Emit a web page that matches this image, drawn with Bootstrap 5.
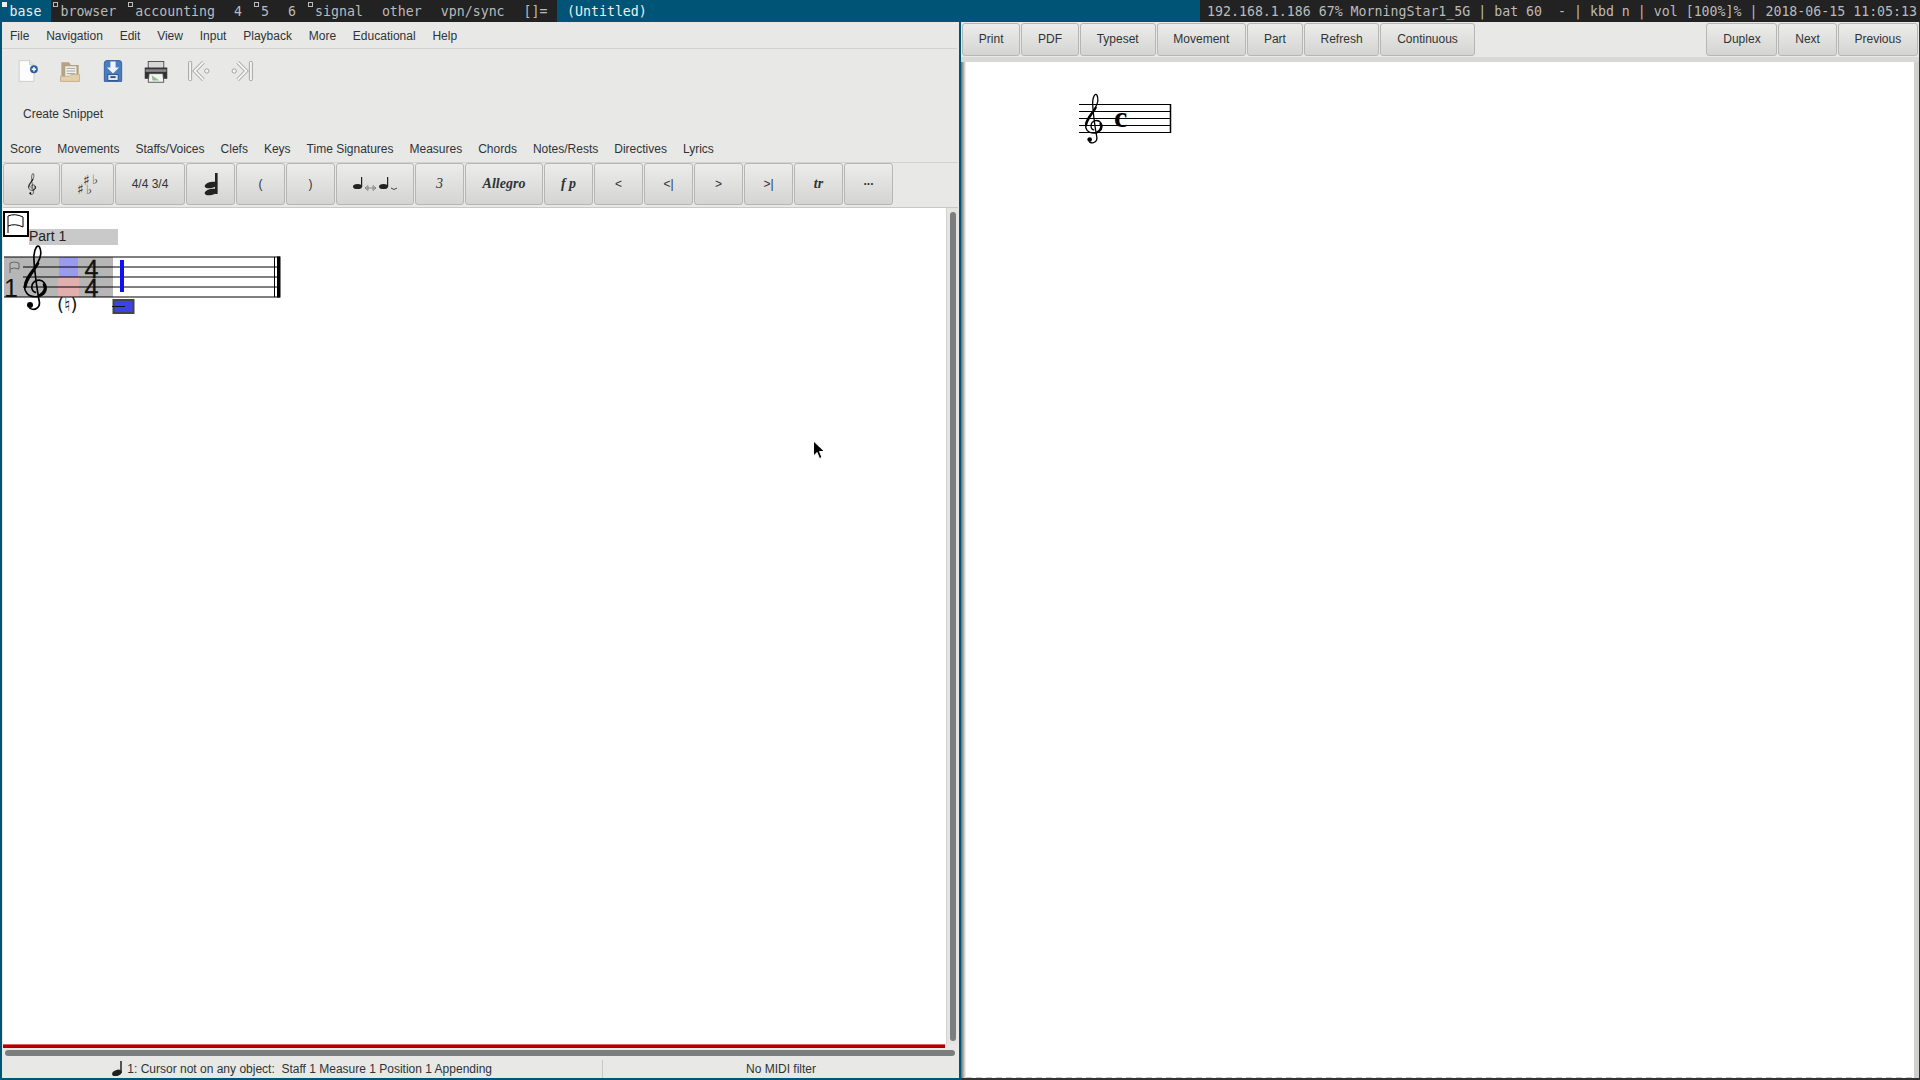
<!DOCTYPE html>
<html lang="en">
<head>
<meta charset="UTF-8">
<title>Denemo</title>
<link href="https://cdn.jsdelivr.net/npm/bootstrap@5.3.0/dist/css/bootstrap.min.css" rel="stylesheet">
<style>
    html, body { margin: 0; height: 100%; overflow: hidden; }
    body { width: 1920px; height: 1080px; background: #fff; font-family: "Liberation Sans", sans-serif; font-size: 12px; color: #2e3436; }
    .wm-bar { height: 22px; background: #005577; color: #eee; font-family: "DejaVu Sans Mono", monospace; font-size: 13.25px; line-height: 24px; white-space: pre; overflow: hidden; }
    .wm-tags { background: #222; color: #bbb; }
    .wm-tag { padding: 0 9.5px; position: relative; }
    .wm-tag.on { background: #005577; color: #eee; }
    .wm-mark { position: absolute; left: 2px; top: 2px; width: 5px; height: 5px; border: 1px solid #bbb; }
    .on .wm-mark { background: #eee; border-color: #eee; }
    .wm-title { padding-left: 10px; }
    .wm-status { background: #222; color: #bbb; padding: 0 3px 0 7px; }
    .main-row { height: 1058px; }
    .left-win { width: 961px; flex: none; background: #e8e8e7; border-left: 2px solid #005577; border-right: 2px solid #005577; border-bottom: 2px solid #005577; }
    .menu-row { height: 27px; margin-right: 2px; padding-left: 8px; column-gap: 16.8px; line-height: 28px; border-bottom: 1px solid #d2d2d0; }
    .tool-row { height: 44px; padding-left: 12px; gap: 17px; }
    .tool-row svg { width: 26px; height: 26px; }
    .snippet-row { height: 33px; padding-left: 21px; padding-top: 14px; line-height: 14px; }
    .tabs-row { height: 36px; padding-left: 8px; padding-top: 16px; column-gap: 16px; line-height: 14px; }
    .tabs-row span, .menu-row span { white-space: nowrap; }
    .gtk-btn { --bs-btn-padding-x: 0; --bs-btn-padding-y: 0; --bs-btn-font-size: 12px; --bs-btn-border-radius: 3px; border: 1px solid #b6b6b4; background: linear-gradient(#ececeb, #d4d4d2); color: #2e3436; display: flex; align-items: center; justify-content: center; line-height: 1; }
    .btn-grid { display: grid; grid-template-columns: 57px 53px 70px 49px 49px 49px 78px 49px 78px 49px 49px 49px 49px 49px 49px 49px; column-gap: 1px; height: 43px; margin-left: 1px; border-top: 1px solid #d2d2d0; margin-right: 1px; }
    .serif-i { font-family: "Liberation Serif", serif; font-style: italic; }
    .serif-b { font-weight: 700; font-size: 14px; }
    .num-three { --bs-btn-font-size: 14px; }
    .dots-up { padding-bottom: 7px; }
    .score-frame { position: relative; height: 837px; margin: 2px 1px 0 1px; border-top: 1px solid #c8c8c6; background: #fff; overflow: hidden; }
    .vtrack { position: absolute; right: 0; top: 0; bottom: 0; width: 12px; background: #e4e4e3; border-left: 1px solid #d2d2d0; }
    .vthumb { position: absolute; left: 3px; width: 6px; top: 4px; bottom: 3px; background: #7a7e7e; border-radius: 3px; }
    .red-line { margin: 0 14px 0 1px; background: #b00000; border-top: 1px solid #d86060; height: 4px; }
    .hscroll { height: 12px; padding: 2px 4px 4px 3px; }
    .hthumb { height: 6px; background: #7a7e7e; border-radius: 3px; }
    .status-row { height: 18px; line-height: 19px; white-space: pre; }
    .status-left { width: 601px; border-right: 1px solid #c8c8c6; }
    .status-right { flex: 1; }
    .status-row svg { width: 12px; height: 15px; }
    .right-win { flex: 1; background: #fff; border-right: 1px solid #333; border-bottom: 2px solid #333; }
    .print-tools { height: 35px; background: #e8e8e7; padding: 1px 1px 2px 1px; gap: 1px; }
    .print-tools .gtk-btn { padding: 0 15.8px 2px; height: 33px; }
    .print-sep { height: 5px; background: #d8d8d6; }
    .print-page { height: 1016px; background: #fff; border-right: 5px solid #d0d0ce; }
    .print-shadow { width: 5px; background: linear-gradient(90deg, #6a6a6a, #f8f8f8); }
    .print-sheet { background: repeating-linear-gradient(90deg, #c8c8c8 0 6px, transparent 6px 10px) left bottom / 100% 1px no-repeat; }
    .mouse-arrow { position: absolute; left: 812px; top: 440px; width: 14px; height: 20px; }
</style>
</head>
<body>
<svg width="0" height="0" class="position-absolute">
    <symbol id="clef" viewBox="60 110 90 215">
        <g fill="none" stroke="#000" stroke-linecap="round">
            <path stroke-width="5" d="M106 262C92 258 90 232 112 226C130 222 140 240 138 252C136 268 120 276 104 275C82 274 72 258 74 240C76 215 100 195 112 175C122 158 126 140 118 125C112 118 104 130 102 150C100 175 112 260 118 290C121 308 104 318 90 310"/>
            <path stroke-width="8" d="M76 245C78 222 100 200 114 175M132 238C138 250 134 264 118 272"/>
        </g>
        <circle cx="90" cy="300" r="9" fill="#000"/>
    </symbol>
    <symbol id="note" viewBox="0 0 16 20">
        <rect x="11" y="0" width="2" height="16" fill="#222"/>
        <ellipse cx="6.500" cy="16" rx="6.500" ry="4" fill="#222" transform="rotate(-20 6.500 16)"/>
    </symbol>
</svg>

<div class="wm-bar d-flex">
    <div class="wm-tags d-flex">
        <span class="wm-tag on"><i class="wm-mark"></i>base</span>
        <span class="wm-tag"><i class="wm-mark"></i>browser</span>
        <span class="wm-tag"><i class="wm-mark"></i>accounting</span>
        <span class="wm-tag">4</span>
        <span class="wm-tag"><i class="wm-mark"></i>5</span>
        <span class="wm-tag">6</span>
        <span class="wm-tag"><i class="wm-mark"></i>signal</span>
        <span class="wm-tag">other</span>
        <span class="wm-tag">vpn/sync</span>
        <span class="wm-tag">[]=</span>
    </div>
    <div class="wm-title flex-grow-1">(Untitled)</div>
    <div class="wm-status">192.168.1.186 67% MorningStar1_5G | bat 60  - | kbd n | vol [100%]% | 2018-06-15 11:05:13</div>
</div>

<div class="main-row d-flex">
    <div class="left-win d-flex flex-column">
        <div class="menu-row d-flex">
            <span>File</span><span>Navigation</span><span>Edit</span><span>View</span><span>Input</span><span>Playback</span><span>More</span><span>Educational</span><span>Help</span>
        </div>
        <div class="tool-row d-flex align-items-center">
            <svg viewBox="0 0 30 30"><path d="M6 3H18L23 8V27H6Z" fill="#fdfdfd" stroke="#c8c8c8"/><path d="M18 3V8H23" fill="#e4e4e4" stroke="#c8c8c8"/><circle cx="23" cy="13" r="4.500" fill="#2c5f9e"/><path d="M20.500 13H25.500M23 10.500V15.500" stroke="#fff" stroke-width="1.600"/></svg>
            <svg viewBox="0 0 30 30"><path d="M5 5H14L16 8H25V27H5Z" fill="#b9a27f"/><rect x="9" y="9" width="14" height="13" fill="#f1f1ee" stroke="#a89878"/><path d="M11 12H21M11 15H21M11 18H21" stroke="#999"/><path d="M4 21H14L16 19H26V27H4Z" fill="#e3cfae" stroke="#c4ae8c"/></svg>
            <svg viewBox="0 0 30 30"><path d="M5 6Q5 3 8 3H22Q25 3 25 6V27H5Z" fill="#4a7cc4" stroke="#2d5799"/><path d="M12 4H18V11H22L15 18L8 11H12Z" fill="#f2f4f7"/><path d="M9 19H21V26H9Z" fill="#dfe6ef" stroke="#24477f"/><rect x="12" y="21" width="6" height="2" fill="#24477f"/></svg>
            <svg viewBox="0 0 30 30"><rect x="6" y="4" width="18" height="9" fill="#d8d8d8" stroke="#444"/><path d="M2 11H28V24H2Z" fill="#333"/><rect x="3" y="13" width="24" height="3" fill="#888"/><path d="M7 18H23L24 28H6Z" fill="#f3f3f3" stroke="#444"/><path d="M10 20L19 26H11Z" fill="#8fbf8c"/></svg>
            <svg viewBox="0 0 30 30"><rect x="3" y="4" width="3.500" height="22" rx="1" fill="#f4f4f4" stroke="#999"/><path d="M20 5L10 15L20 25" fill="none" stroke="#999" stroke-width="4"/><path d="M20 5L10 15L20 25" fill="none" stroke="#f4f4f4" stroke-width="2.400"/><circle cx="24" cy="15" r="2.500" fill="#f4f4f4" stroke="#999"/></svg>
            <svg viewBox="0 0 30 30"><rect x="23.500" y="4" width="3.500" height="22" rx="1" fill="#f4f4f4" stroke="#999"/><path d="M10 5L20 15L10 25" fill="none" stroke="#999" stroke-width="4"/><path d="M10 5L20 15L10 25" fill="none" stroke="#f4f4f4" stroke-width="2.400"/><circle cx="6" cy="15" r="2.500" fill="#f4f4f4" stroke="#999"/></svg>
        </div>
        <div class="snippet-row">Create Snippet</div>
        <div class="tabs-row d-flex">
            <span>Score</span><span>Movements</span><span>Staffs/Voices</span><span>Clefs</span><span>Keys</span><span>Time Signatures</span><span>Measures</span><span>Chords</span><span>Notes/Rests</span><span>Directives</span><span>Lyrics</span>
        </div>
        <div class="btn-grid">
            <button class="btn gtk-btn"><svg width="10" height="24"><use href="#clef" width="10" height="24"/></svg></button>
            <button class="btn gtk-btn"><svg width="24" height="26" viewBox="0 0 24 26"><text x="1" y="23" font-size="14" font-family="DejaVu Sans" fill="#333">♯</text><text x="7" y="14" font-size="14" font-family="DejaVu Sans" fill="#333">♯</text><text x="10" y="23" font-size="13" font-family="DejaVu Sans" fill="#333">♭</text><text x="16" y="13" font-size="13" font-family="DejaVu Sans" fill="#333">♭</text></svg></button>
            <button class="btn gtk-btn">4/4 3/4</button>
            <button class="btn gtk-btn"><svg width="16" height="24" viewBox="0 0 16 24"><rect x="12" y="1" width="2.600" height="21" fill="#222"/><ellipse cx="8" cy="13" rx="6.500" ry="3" fill="#222" transform="rotate(-14 8 13)"/><ellipse cx="8" cy="20" rx="6.500" ry="3" fill="#222" transform="rotate(-14 8 20)"/></svg></button>
            <button class="btn gtk-btn">(</button>
            <button class="btn gtk-btn">)</button>
            <button class="btn gtk-btn"><svg width="46" height="16" viewBox="0 0 46 16"><rect x="9" y="1" width="1.200" height="10" fill="#222"/><ellipse cx="5.500" cy="10.500" rx="4.500" ry="2.600" fill="#222"/><path d="M13 12H24M13 12L16 9.500V14.500ZM24 12L21 9.500V14.500Z" fill="none" stroke="#777" stroke-width=".8"/><rect x="35" y="1" width="1.200" height="10" fill="#222"/><ellipse cx="31.500" cy="10.500" rx="4.500" ry="2.600" fill="#222"/><path d="M39 12Q42 15 45 12" fill="none" stroke="#444"/></svg></button>
            <button class="btn gtk-btn serif-i num-three">3</button>
            <button class="btn gtk-btn serif-i serif-b">Allegro</button>
            <button class="btn gtk-btn serif-i serif-b">f p</button>
            <button class="btn gtk-btn">&lt;</button>
            <button class="btn gtk-btn">&lt;|</button>
            <button class="btn gtk-btn">&gt;</button>
            <button class="btn gtk-btn">&gt;|</button>
            <button class="btn gtk-btn serif-i serif-b">tr</button>
            <button class="btn gtk-btn fw-bold dots-up">...</button>
        </div>
        <div class="score-frame">
            <svg width="300" height="120" viewBox="3 208 300 120" class="d-block">
                <rect x="4" y="212" width="24" height="24" fill="#fff" stroke="#000" stroke-width="2"/>
                <path d="M8 233V216Q15 213 23 217V227Q15 223 8 226" fill="none" stroke="#000"/>
                <rect x="29" y="229" width="89" height="16" fill="#c9c9c9"/>
                <text x="29" y="241" font-family="Liberation Sans" font-size="14" fill="#222">Part 1</text>
                <rect x="4" y="257" width="109" height="40" fill="#b6b6b6"/>
                <rect x="59" y="257" width="19" height="20" fill="#9a9bef"/>
                <rect x="58" y="277" width="21" height="20" fill="#e2aeae"/>
                <path d="M4 257H280M23 267H280M23 277H280M23 287H280M4 297H280" stroke="#000" stroke-width="1"/>
                <path d="M10 273V263Q14 261 19 263V269Q14 267 10 269" fill="none" stroke="#666"/>
                <text x="4" y="297" font-family="Liberation Sans" font-size="25" fill="#111">1</text>
                <use href="#clef" x="20" y="241.700" width="30" height="71.700"/>
                <text x="84.500" y="278" font-family="Liberation Sans" font-size="25" fill="#111" stroke="#111" stroke-width=".4">4</text>
                <text x="84.500" y="297" font-family="Liberation Sans" font-size="25" fill="#111" stroke="#111" stroke-width=".4">4</text>
                <text x="57" y="311" font-family="DejaVu Sans" font-size="18" fill="#111">(♮)</text>
                <rect x="120" y="260" width="4" height="32" fill="#1010f0"/>
                <rect x="113.500" y="300" width="20" height="13" fill="#3b43e6" stroke="#444" stroke-width="2"/>
                <path d="M112 306.500H125" stroke="#111"/>
                <path d="M274.500 257V297" stroke="#000"/>
                <rect x="277" y="256.500" width="3.500" height="41" fill="#000"/>
            </svg>
            <div class="vtrack"><div class="vthumb"></div></div>
        </div>
        <div class="red-line"></div>
        <div class="hscroll"><div class="hthumb"></div></div>
        <div class="status-row d-flex text-center">
            <div class="status-left"><svg class="align-text-bottom"><use href="#note" width="12" height="15"/></svg> 1: Cursor not on any object:  Staff 1 Measure 1 Position 1 Appending</div>
            <div class="status-right">No MIDI filter</div>
        </div>
    </div>
    <div class="right-win d-flex flex-column">
        <div class="print-tools d-flex">
            <button class="btn gtk-btn">Print</button>
            <button class="btn gtk-btn">PDF</button>
            <button class="btn gtk-btn">Typeset</button>
            <button class="btn gtk-btn">Movement</button>
            <button class="btn gtk-btn">Part</button>
            <button class="btn gtk-btn">Refresh</button>
            <button class="btn gtk-btn">Continuous</button>
            <button class="btn gtk-btn ms-auto">Duplex</button>
            <button class="btn gtk-btn">Next</button>
            <button class="btn gtk-btn">Previous</button>
        </div>
        <div class="print-sep"></div>
        <div class="print-page d-flex">
            <div class="print-shadow"></div>
            <div class="print-sheet flex-grow-1">
                <svg width="220" height="110" viewBox="966 62 220 110" class="d-block">
                    <path d="M1079 104.500H1171M1079 111.500H1171M1079 118.500H1171M1079 125.500H1171M1079 132.500H1171" stroke="#000"/>
                    <path d="M1170.500 104V133" stroke="#000" stroke-width="1.500"/>
                    <use href="#clef" x="1082" y="91" width="23" height="55"/>
                    <text x="1114" y="127" font-family="Liberation Serif" font-weight="700" font-size="30" fill="#000">c</text>
                </svg>
            </div>
        </div>
    </div>
</div>
<svg class="mouse-arrow" viewBox="0 0 14 20"><path d="M1.500 1V16L5 12.500L7.500 18.500L10 17.500L7.500 11.500H12.500Z" fill="#000" stroke="#fff"/></svg>
<script src="https://cdn.jsdelivr.net/npm/bootstrap@5.3.0/dist/js/bootstrap.bundle.min.js"></script>
</body>
</html>
